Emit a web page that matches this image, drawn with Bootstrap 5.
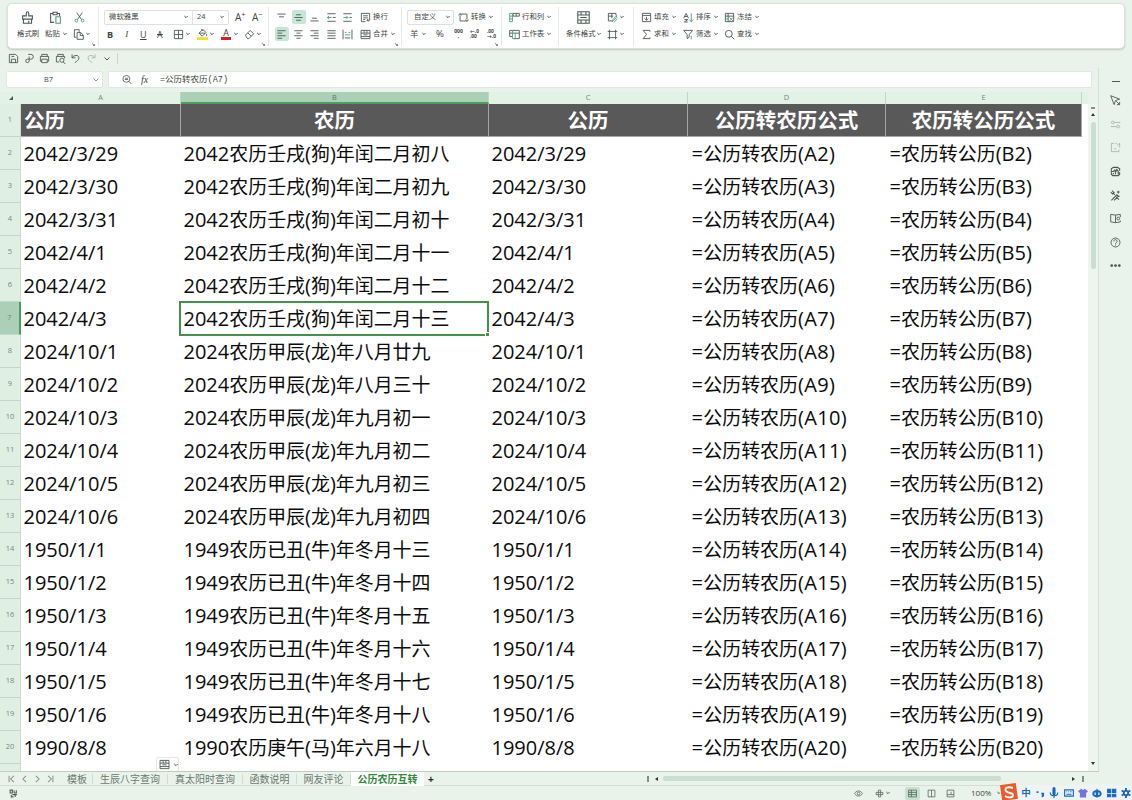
<!DOCTYPE html>
<html lang="zh-CN">
<head>
<meta charset="utf-8">
<meta name="viewport" content="width=device-width, initial-scale=1">
<title>公历农历互转</title>
<link href="https://cdn.jsdelivr.net/npm/bootstrap@5.3.0/dist/css/bootstrap.min.css" rel="stylesheet">
<style>
  body{height:800px;width:1132px;overflow:hidden;background:#eaf3eb;color:#3d4741;font-family:"Open Sans","Noto Sans CJK SC",sans-serif;font-size:7.4px;line-height:1}
  svg{display:block;flex:none;fill:none;stroke:#4b5952;stroke-width:1.3;overflow:visible}
  .ic{width:11px;height:11px}
  .big{width:13px;height:13px}
  .caret{width:4px;height:4px;stroke-width:1.5}
  .faded{opacity:.4}
  .ribbon{height:46px;margin:3px 7px 0;background:#fff;border:1px solid #d9e3da;border-radius:5px;box-shadow:0 1px 2px #b9c8bc}
  .sect{position:relative;height:39px;margin-top:3px;border-right:1px solid #e2e8e3;display:grid;grid-template-rows:20px 13px;align-content:start;white-space:nowrap}
  .sect:last-child{border:0}
  .line{display:grid;align-items:center;height:20px}
  .line + .line{height:14px}
  .cell{display:flex;align-items:center}
  .corner{position:absolute;right:3px;bottom:0;width:3px;height:3px;stroke-width:1.3}
  .clip{width:91px}.clip .line{grid-template-columns:28px 25px 1fr;padding-left:13px}
  .clip .line + .line{grid-template-columns:28px 28px 1fr;padding-left:9px}
  .face{width:170px}.face .l1{grid-template-columns:131px 17px 1fr;padding-left:5px}
  .face .l2{grid-template-columns:16px 17px 17px 16px 24px 24px 23px 1fr;padding-left:8px}
  .align{width:133px}.align .line{grid-template-columns:17px 16px 17px 16px 18px 1fr;padding-left:7px}
  .num{width:100px}.num .l1{grid-template-columns:51px 1fr;padding-left:5px}
  .num .l2{grid-template-columns:26px 17px 17px 17px 1fr;padding-left:8px}
  .rows{width:57px}.rows .line{padding-left:7px}
  .cond{width:75px}.cond .line{grid-template-columns:30px 1fr;padding-left:18px}
  .cond .line + .line{grid-template-columns:41px 1fr;padding-left:7px}
  .edit{width:140px}.edit .line{grid-template-columns:42px 41px 1fr;padding-left:7px}
  .cell .ic + span{margin-left:2px}
  .cell .caret{margin-left:3px}
  .cell .ic + .caret{margin-left:2px}
  .pick{height:15px;border:1px solid #dce2dd;border-radius:2px;align-items:center;display:flex}
  .on::before{content:"";position:absolute;inset:-1.5px;background:#c7e6d6;border-radius:2px;z-index:0}
  .on{position:relative;width:11px}.on svg{position:relative}
  .quick{height:19px;padding-left:8px;gap:4.6px}
  .quick .bar{width:1px;height:11px;background:#ccd6ce}
  .fbar{height:17px;margin-top:3px;padding-left:6px;gap:5px}
  .fbar>div{background:#fff;border:1px solid #dfe7e0;border-radius:2px;height:17px}
  .namebox{width:97px}.formula{width:984px;padding-left:13px}
  .heads{height:12px;margin-top:4px;background:#e2f2e5;color:#7b857e;width:1088px}
  .cols{display:grid;grid-template-columns:21px 160px 308px 199px 198px 196px 7px}
  .heads span{display:flex;align-items:center;justify-content:center;border-right:1px solid #c4d2c7}
  .heads .sel{background:#abd0b7;border-bottom:2px solid #4f9d5b;color:#527b5e;padding-top:2px}
  .sheet{height:667px;width:1089px;overflow:hidden;background:#fff;position:relative;color:#0b0b0b}
  .sheet .cols{height:33px}
  .sheet .cols>div{display:flex;align-items:center;font-size:18.95px;padding:0 0 0 2.5px;white-space:pre}
  .sheet .cols>div i{font-style:normal;font-size:20px}
  .sheet .cols>div:nth-child(5),.sheet .cols>div:nth-child(6){padding-left:3.5px}
  .sheet .cols>div:nth-child(5) i{letter-spacing:.35px}
  .sheet .cols>.rn{font-size:7.5px;color:#7b857e;background:#dff0e3;justify-content:center;padding:0;border-bottom:1px solid #c5d5c9;border-right:1px solid #cedbd1}
  .sheet .cols>.rn.sel{background:#abd0b7;border-right:2px solid #4f9d5b}
  .sheet .top>.hd{background:#595959;color:#fff;font-weight:700;font-size:20.5px;justify-content:center;border-right:1px solid #a6a6a6;border-bottom:1px solid #a6a6a6;padding:0!important}
  .sheet .top>.hd:nth-child(2){justify-content:start;padding-left:3px!important}
  .picked{position:absolute;left:179px;top:197px;width:310px;height:35px;border:2px solid #429248}
  .picked::after{content:"";position:absolute;right:-3px;bottom:-3px;width:5px;height:5px;background:#429248;border:1px solid #fff}
  .paste{position:absolute;left:156px;top:653px;width:23px;height:15px;background:#fff;border:1px solid #e5e9e6;border-radius:2px}
  .vbar{width:10px;height:667px;background:#eef5ef;padding-top:2px}
  .vbar .thumb{width:5px;height:147px;background:#cbded3;border-radius:2px;margin:5px auto 0}
  .side{width:33px;height:703px;padding-top:30px}
  .side svg{margin-bottom:12.65px}
  .main{width:1099px;border-right:1px solid #d5e0d7}
  .tabsrow{height:15px;border-top:1px solid #bfd0c2;border-bottom:1px solid #d4ded5;background:#e9f3ea;color:#6c7770;font-size:10px;width:1099px;white-space:nowrap}
  .tabsrow .tab{display:flex;align-items:center;justify-content:center;height:10px;border-right:1px solid #d0dbd2}
  .tabsrow .cur{height:14px;background:#fff;color:#2e8b3a;font-weight:700;border:0}
  .t1{width:31px}.t2{width:75px}.t3{width:75px}.t4{width:54px}.t5{width:54px}.t6{width:73px}
  .navs{width:62px;padding-left:7px;gap:4px}.navs svg{width:9px;height:8px;stroke:#88938b}
  .hthumb{width:338px;height:5px;background:#cbded3;border-radius:2px}
  .status{height:14px}
  .ime{position:absolute;left:1000px;top:785px;width:132px;height:15px;background:#eef4f3}
  .ime svg{stroke:#1967c5;width:10px;height:10px;stroke-width:1.8}
</style>
</head>
<body>
<svg width="0" height="0" class="position-absolute" aria-hidden="true">
  <symbol id="down" viewBox="0 0 6 6"><path d="M.5 1.500 3 4 5.500 1.500"/></symbol>
  <symbol id="launch" viewBox="0 0 6 6"><path d="M0 0v3M1 1l4 4M5 2v3H2"/></symbol>
  <symbol id="brush" viewBox="0 0 16 16"><path d="M6.500 6V2.500a1.500 1.500 0 0 1 3 0V6H14v4H2V6zM3 10v5h10v-5M9.500 12v3"/></symbol>
  <symbol id="clipb" viewBox="0 0 16 16"><path d="M6 14H2V3h3m5 0h3v3M5 1.500h5v3H5z"/><path d="M8.500 7H14v8H8.500z" stroke="#4b9b82"/></symbol>
  <symbol id="cut" viewBox="0 0 16 16"><path d="m4 1 7 10M12 1 5 11"/><g stroke="#4b9b82"><circle cx="3.500" cy="12.500" r="2"/><circle cx="12.500" cy="12.500" r="2"/></g></symbol>
  <symbol id="copy" viewBox="0 0 16 16"><path d="M5 12H2V1h7v3"/><path d="M6 5h5l4 4v6H6zM10.500 5v4.500H15"/></symbol>
  <symbol id="grid" viewBox="0 0 16 16"><path d="M2 2h12v12H2zM8 2v12M2 8h12"/></symbol>
  <symbol id="bucket" viewBox="0 0 16 16"><path d="M3 6 8.500 .5 13 5 7.500 10.500zM3 6h9M6 0l3 3M14 7v3"/><path d="M0 12h16v4H0z" fill="#ecdf24" stroke="none"/></symbol>
  <symbol id="erase" viewBox="0 0 16 16"><path d="m2 9 7-7 5 5-7 7H5zM5.500 5.500l5 5"/></symbol>
  <symbol id="atop" viewBox="0 0 16 16"><path d="M2 3h12M4.500 7h7"/></symbol>
  <symbol id="amid" viewBox="0 0 16 16"><path d="M4.500 4h7M2 8h12M4.500 12h7"/></symbol>
  <symbol id="abot" viewBox="0 0 16 16"><path d="M4.500 9h7M2 13h12"/></symbol>
  <symbol id="ind1" viewBox="0 0 16 16"><path d="M2 2.500h12M10 8h4M2 13.500h12"/><path d="M8 8H2m2.500-2.500L2 8l2.500 2.500" stroke="#4b9b82"/></symbol>
  <symbol id="ind2" viewBox="0 0 16 16"><path d="M2 2.500h12M11 8h3M2 13.500h12"/><path d="M2 8h6M6 5.500 8.500 8 6 10.500" stroke="#4b9b82"/></symbol>
  <symbol id="wrap" viewBox="0 0 16 16"><path d="M8 14H2V2h12v6M4.500 5.500h7M4.500 8.500h7M4.500 11h3M14 8v4h-4m2-2-2 2 2 2"/></symbol>
  <symbol id="al" viewBox="0 0 16 16"><path d="M2 2.500h12M2 6h7M2 9.800h12M2 13.500h7"/></symbol>
  <symbol id="ac" viewBox="0 0 16 16"><path d="M2 2.500h12M5 6h6M2 9.800h12M5 13.500h6"/></symbol>
  <symbol id="ar" viewBox="0 0 16 16"><path d="M2 2.500h12M7 6h7M2 9.800h12M7 13.500h7"/></symbol>
  <symbol id="aj" viewBox="0 0 16 16"><path d="M2 2.500h12M2 6h12M2 9.800h12M2 13.500h12"/></symbol>
  <symbol id="dist" viewBox="0 0 16 16"><path d="M1.500 1v14M14.500 1v14M4 13h8"/><path d="M4 5h2.500M9.500 5H12M4 8.500h8" stroke="#4b9b82"/></symbol>
  <symbol id="merge" viewBox="0 0 16 16"><path d="M1.500 2h13v12h-13zM1.500 6h13M6 2v4M10 2v4M1.500 11h13M5 8.500h6"/></symbol>
  <symbol id="conv" viewBox="0 0 16 16"><path d="M4 3h9v8M12 13H3V5M1 5l2-3 2 3M11 11l2 3 2-3"/></symbol>
  <symbol id="rc" viewBox="0 0 16 16"><path d="M6 2h9v4H6zM10.500 2v4"/><path d="M1 2h4v12H1zM1 6h4M1 10h4" stroke="#4b9b82"/></symbol>
  <symbol id="ws" viewBox="0 0 16 16"><path d="M1 2h14v12H7M1 2v9h4M1 6h14"/><path d="M5 2v12h4V6" stroke="#4b9b82"/></symbol>
  <symbol id="cf" viewBox="0 0 16 16"><path d="M1 1h14v14H1zM1 5h14M1 11h14M5 1v4M11 1v4M4 8h8M5 11v4M11 11v4"/></symbol>
  <symbol id="style" viewBox="0 0 16 16"><path d="M8 13H2V2h11v3M2 6h7M7 2v7"/><path d="m14 5-6 7v2l6-6zM10 15l5-5" stroke="#4b9b82"/></symbol>
  <symbol id="frame" viewBox="0 0 16 16"><path d="M3.500 1v14M12.500 1v14M1 3.500h14M1 12.500h14"/></symbol>
  <symbol id="fill" viewBox="0 0 16 16"><path d="M2 2h12v12H2zM2 5h12M8 7v5M5.500 9.500 8 12l2.500-2.500"/></symbol>
  <symbol id="sum" viewBox="0 0 16 16"><path d="M13 4V2H3l5 6-5 6h10v-2"/></symbol>
  <symbol id="sort" viewBox="0 0 16 16"><path d="m1 9 3.500-7L8 9M2.500 6.500h4M2 11h5l-5 3.500h5"/><path d="M12 2v12m-2.500-3 2.500 3 2.500-3" stroke="#4b9b82"/></symbol>
  <symbol id="funnel" viewBox="0 0 16 16"><path d="M1 2h13L9 8v4l-3 2V8z"/><path d="M12 10v5" stroke="#4b9b82"/></symbol>
  <symbol id="freeze" viewBox="0 0 16 16"><path d="M2 2h12v12H2zM6 2v12M2 6h12"/><path d="m8 8 5 5M13 8l-5 5M2 10h4" stroke="#4b9b82"/></symbol>
  <symbol id="find" viewBox="0 0 16 16"><circle cx="7" cy="7" r="5"/><path d="m10.500 10.500 4.500 4.500"/></symbol>
  <symbol id="save" viewBox="0 0 16 16"><path d="M2 2h9l3 3v9H2zM5 14V9h6v5M5 5h4"/></symbol>
  <symbol id="share" viewBox="0 0 16 16"><path d="M6 2h4a3.500 3.500 0 0 1 0 7H5a2.500 2.500 0 1 0 2.500 2.500V5"/></symbol>
  <symbol id="print" viewBox="0 0 16 16"><path d="M4 5V2h8v3M4 12H2V5h12v7h-2M4 9h8v5H4z"/></symbol>
  <symbol id="preview" viewBox="0 0 16 16"><path d="M4 5V2h8v3M6 13H2V5h12v3"/><circle cx="10" cy="10.500" r="3"/><path d="m12 13 3 3"/></symbol>
  <symbol id="undo" viewBox="0 0 16 16"><path d="M3 2v5h5M3 7c2-4 10-5 10 0 0 3-3 5-6 7"/></symbol>
  <symbol id="redo" viewBox="0 0 16 16"><path d="M13 2v5H8m5 0C11 3 3 2 3 7c0 3 3 5 6 7"/></symbol>
  <symbol id="zoomi" viewBox="0 0 16 16"><circle cx="7" cy="7" r="5.500"/><path d="M4.500 6h5M4.500 8h5m1.500 3 4 4"/></symbol>
  <symbol id="arrow" viewBox="0 0 16 16"><path d="m1 1 13 5-6 2-2 6zM9 9l5 5M14 10v4h-4"/></symbol>
  <symbol id="sliders" viewBox="0 0 16 16"><circle cx="4" cy="5" r="2"/><circle cx="12" cy="11" r="2"/><path d="M6 5h9M1 11h9"/></symbol>
  <symbol id="resize" viewBox="0 0 16 16"><path d="M6 2H2v12h11v-3M8 2h2M10 5l4-3v6M6 10h3"/></symbol>
  <symbol id="chart" viewBox="0 0 16 16"><path d="M2 7V4l3-2h6l3 2v3M2 9v3l2 2h8l2-2V9M1 8h4l2-2 1 3 2-4 2 3v4M5 10v2M8 10v2" stroke-width="1.700"/></symbol>
  <symbol id="tools" viewBox="0 0 16 16"><path d="m2 15 8-8 2 2-6 6M4 4l3 3M9 10l4 4M1 3l3 3 2-2-3-3M12 1v4M10 3h4M13 8v2" stroke-width="1.500"/></symbol>
  <symbol id="book" viewBox="0 0 16 16"><path d="M8 3 1 2v11l7 1 7-1v-2M8 3v11M8 3l7-1v4"/><circle cx="12" cy="8" r="2"/></symbol>
  <symbol id="help" viewBox="0 0 16 16"><circle cx="8" cy="8" r="6.500"/><path d="M5.500 6.500c0-4 5-3 5 0 0 1.500-2.500 1.500-2.500 3.500m0 1v1.500"/></symbol>
  <symbol id="dots" viewBox="0 0 16 16"><g fill="#4b5952" stroke="none"><circle cx="2.500" cy="8" r="2"/><circle cx="8" cy="8" r="2"/><circle cx="13.500" cy="8" r="2"/></g></symbol>
  <symbol id="eye" viewBox="0 0 16 16"><path d="M1 8c3-6 11-6 14 0-3 6-11 6-14 0z"/><circle cx="8" cy="8" r="2.500"/></symbol>
  <symbol id="cross" viewBox="0 0 16 16"><path d="M6 6V2h4v4h4v4h-4v4H6v-4H2V6zM6 6h4v4H6z"/></symbol>
  <symbol id="normal" viewBox="0 0 16 16"><path d="M1 2h14v12H1zM1 6h14M6 2v12M1 10h14"/></symbol>
  <symbol id="pages" viewBox="0 0 16 16"><path d="M2 2h12v12H2zM8 2v12"/></symbol>
  <symbol id="brk" viewBox="0 0 16 16"><path d="M2 2h12v12H2zM2 10h7V5M9 10h5"/></symbol>
</svg>

<header class="ribbon d-flex">
  <div class="sect clip">
    <div class="line"><svg class="big"><use href="#brush"/></svg><svg class="big"><use href="#clipb"/></svg><svg class="ic"><use href="#cut"/></svg></div>
    <div class="line"><span>格式刷</span><div class="cell"><span>粘贴</span><svg class="caret"><use href="#down"/></svg></div><div class="cell"><svg class="ic"><use href="#copy"/></svg><svg class="caret"><use href="#down"/></svg></div></div>
    <svg class="corner"><use href="#launch"/></svg>
  </div>
  <div class="sect face">
    <div class="line l1"><div class="pick" style="width:125px"><span class="ps-1" style="width:79px">微软雅黑</span><svg class="caret"><use href="#down"/></svg><span class="border-start h-100 d-flex align-items-center ms-1 ps-1" style="width:28px">24</span><svg class="caret"><use href="#down"/></svg></div>
      <span style="font-size:10px">A<sup>+</sup></span><span style="font-size:10px">A<sup>−</sup></span></div>
    <div class="line l2" style="font-size:9px"><b>B</b><i style="font-family:'Liberation Serif'">&nbsp;I</i><u>U</u><s>A</s>
      <div class="cell"><svg class="ic"><use href="#grid"/></svg><svg class="caret"><use href="#down"/></svg></div>
      <div class="cell"><svg class="ic"><use href="#bucket"/></svg><svg class="caret"><use href="#down"/></svg></div>
      <div class="cell"><span style="width:10px;text-align:center;border-bottom:3px solid #d91e28;line-height:8px">A</span><svg class="caret"><use href="#down"/></svg></div>
      <div class="cell"><svg class="ic"><use href="#erase"/></svg><svg class="caret"><use href="#down"/></svg></div></div>
    <svg class="corner"><use href="#launch"/></svg>
  </div>
  <div class="sect align">
    <div class="line"><svg class="ic"><use href="#atop"/></svg><div class="on"><svg class="ic"><use href="#amid"/></svg></div><svg class="ic"><use href="#abot"/></svg><svg class="ic"><use href="#ind1"/></svg><svg class="ic"><use href="#ind2"/></svg><div class="cell"><svg class="ic"><use href="#wrap"/></svg><span>换行</span></div></div>
    <div class="line"><div class="on"><svg class="ic"><use href="#al"/></svg></div><svg class="ic"><use href="#ac"/></svg><svg class="ic"><use href="#ar"/></svg><svg class="ic"><use href="#aj"/></svg><svg class="ic"><use href="#dist"/></svg><div class="cell"><svg class="ic"><use href="#merge"/></svg><span>合并</span><svg class="caret"><use href="#down"/></svg></div></div>
    <svg class="corner"><use href="#launch"/></svg>
  </div>
  <div class="sect num">
    <div class="line l1"><div class="pick" style="width:47px"><span style="width:37px;padding-left:6px">自定义</span><svg class="caret" style="margin-left:1px"><use href="#down"/></svg></div><div class="cell"><svg class="ic"><use href="#conv"/></svg><span>转换</span><svg class="caret"><use href="#down"/></svg></div></div>
    <div class="line l2"><div class="cell" style="font-size:8.5px">羊<svg class="caret"><use href="#down"/></svg></div><span style="font-size:9.5px">%</span>
      <b style="font-size:5px;line-height:5px;text-align:center;width:11px">000<br>,</b><b style="font-size:4.8px;line-height:5px;width:11px">←.0<br>.00</b><b style="font-size:4.8px;line-height:5px;width:11px">.00<br>→.0</b></div>
    <svg class="corner"><use href="#launch"/></svg>
  </div>
  <div class="sect rows">
    <div class="line"><div class="cell"><svg class="ic"><use href="#rc"/></svg><span>行和列</span><svg class="caret"><use href="#down"/></svg></div></div>
    <div class="line"><div class="cell"><svg class="ic"><use href="#ws"/></svg><span>工作表</span><svg class="caret"><use href="#down"/></svg></div></div>
  </div>
  <div class="sect cond">
    <div class="line"><svg class="big"><use href="#cf"/></svg><div class="cell"><svg class="ic"><use href="#style"/></svg><svg class="caret"><use href="#down"/></svg></div></div>
    <div class="line"><div class="cell"><span>条件格式</span><svg class="caret" style="margin-left:1px"><use href="#down"/></svg></div><div class="cell"><svg class="ic"><use href="#frame"/></svg><svg class="caret"><use href="#down"/></svg></div></div>
  </div>
  <div class="sect edit">
    <div class="line"><div class="cell"><svg class="ic"><use href="#fill"/></svg><span>填充</span><svg class="caret"><use href="#down"/></svg></div><div class="cell"><svg class="ic"><use href="#sort"/></svg><span>排序</span><svg class="caret"><use href="#down"/></svg></div><div class="cell"><svg class="ic"><use href="#freeze"/></svg><span>冻结</span><svg class="caret"><use href="#down"/></svg></div></div>
    <div class="line"><div class="cell"><svg class="ic"><use href="#sum"/></svg><span>求和</span><svg class="caret"><use href="#down"/></svg></div><div class="cell"><svg class="ic"><use href="#funnel"/></svg><span>筛选</span><svg class="caret"><use href="#down"/></svg></div><div class="cell"><svg class="ic"><use href="#find"/></svg><span>查找</span><svg class="caret"><use href="#down"/></svg></div></div>
  </div>
</header>

<div class="quick d-flex align-items-center">
  <svg class="ic"><use href="#save"/></svg><svg class="ic"><use href="#share"/></svg><svg class="ic"><use href="#print"/></svg><svg class="ic"><use href="#preview"/></svg><svg class="ic"><use href="#undo"/></svg><svg class="ic faded"><use href="#redo"/></svg><svg style="width:6px;height:6px;margin:0 3px 0 2px;stroke-width:1"><use href="#down"/></svg><div class="bar"></div>
</div>

<div class="d-flex">
  <main class="main">
    <div class="fbar d-flex">
      <div class="namebox d-flex align-items-center"><span class="text-center" style="width:83px">B7</span><svg style="width:6px;height:6px;stroke:#8b958e;margin-left:3px;stroke-width:1"><use href="#down"/></svg></div>
      <div class="formula d-flex align-items-center"><svg class="ic" style="width:10px"><use href="#zoomi"/></svg><i style="font:italic 10px 'Liberation Serif';margin-left:9px;width:19px">fx</i><span style="font-size:8.5px;padding-top:1px;font-family:'Liberation Mono','Noto Sans CJK SC',monospace">=公历转农历(A7)</span></div>
    </div>
    <div class="heads cols"><span class="border-0"><svg width="4" height="4"><path d="M4 0v4H0z" fill="#4b5952" stroke="none"/></svg></span><span>A</span><span class="sel">B</span><span>C</span><span>D</span><span>E</span></div>
    <div class="d-flex">
      <div class="sheet" id="sheet"><div class="picked"></div><div class="paste d-flex align-items-center"><svg class="ic" style="margin-left:2px"><use href="#merge"/></svg><svg class="caret ms-1"><use href="#down"/></svg></div></div>
      <div class="vbar"><svg class="mx-auto" width="6" height="11"><path d="M1 2h4"/><path d="m1 10 2-3 2 3z" fill="#333" stroke="none"/></svg><div class="thumb"></div><svg class="mx-auto" width="4" height="3" style="margin-top:493px"><path d="M0 0h4L2 3z" fill="#333" stroke="none"/></svg></div>
    </div>
  </main>
  <aside class="side d-flex flex-column align-items-center">
    <svg style="width:10px;height:2px;margin:-18px 0 13px;stroke-width:1"><path d="M1 1.500h8"/></svg>
    <svg class="ic"><use href="#arrow"/></svg><svg class="ic faded"><use href="#sliders"/></svg><svg class="ic faded"><use href="#resize"/></svg><svg class="ic"><use href="#chart"/></svg><svg class="ic"><use href="#tools"/></svg><svg class="ic"><use href="#book"/></svg><svg class="ic"><use href="#help"/></svg><svg class="ic"><use href="#dots"/></svg>
  </aside>
</div>

<nav class="tabsrow d-flex align-items-center">
  <div class="navs d-flex"><svg viewBox="0 0 10 10"><path d="M2 1v8M8 1 4 5l4 4"/></svg><svg viewBox="0 0 10 10"><path d="M7 1 3 5l4 4"/></svg><svg viewBox="0 0 10 10"><path d="m3 1 4 4-4 4"/></svg><svg viewBox="0 0 10 10"><path d="M8 1v8M2 1l4 4-4 4"/></svg></div>
  <div class="tab t1">模板</div><div class="tab t2">生辰八字查询</div><div class="tab t3">真太阳时查询</div><div class="tab t4">函数说明</div><div class="tab t5">网友评论</div><div class="tab t6 cur">公历农历互转</div>
  <b class="text-dark ms-1" style="width:219px">+</b>
  <svg width="16" height="6"><path d="M1 0v6"/><path d="M8 3l3-2v4z" fill="#333" stroke="none"/></svg><div class="hthumb"></div>
  <svg width="20" height="6" style="margin-left:67px"><path d="M4 1l3 2-3 2z" fill="#333" stroke="none"/><path d="M15 0v6"/></svg>
</nav>
<footer class="status d-flex align-items-center">
  <svg class="ic" style="margin-left:9px;width:9px;height:9px" viewBox="0 0 16 16"><path d="M2 2h4v5H2zM9 2v5M13 2v5M9 7h5M4 10v4h4M11 10v4M6 10h8" stroke-width="1.800"/></svg>
  <svg class="ic" style="margin-left:836px;width:9px;height:9px"><use href="#eye"/></svg><svg class="ic" style="margin-left:12px;width:9px;height:9px"><use href="#cross"/></svg><svg class="caret" style="margin-left:2px"><use href="#down"/></svg>
  <div style="background:#c5e2d0;padding:2px 3px;margin-left:15px;border-radius:2px"><svg style="width:9px;height:9px"><use href="#normal"/></svg></div><svg style="width:9px;height:9px;margin-left:7px"><use href="#pages"/></svg><svg style="width:9px;height:9px;margin-left:10px"><use href="#brk"/></svg><span style="margin-left:16px;font-size:8px">100%</span><svg class="caret" style="margin-left:6px"><use href="#down"/></svg>
</footer>

<div class="ime d-flex align-items-center" style="gap:4.3px">
  <svg viewBox="0 0 18 18" style="width:18px;height:18px;margin-top:-2px"><path d="m1 3 14-2 2 14-14 2z" fill="#ee5a28" stroke="#ee5a28"/><path d="M13 5C8 3 4 5 6 8s7 1 7 4-5 3-8 1" stroke="#fff" stroke-width="2"/></svg>
  <b style="font-size:9.5px;color:#1967c5;margin-left:-1px">中</b>
  <svg viewBox="0 0 16 16"><path d="M4 5v3M10 9h3v3l-2 2" stroke-width="3"/></svg>
  <svg viewBox="0 0 16 16"><path d="M8 1v8" stroke-width="5" stroke-linecap="round"/><path d="M2 7c0 7 12 7 12 0M8 12v4"/></svg>
  <svg viewBox="0 0 16 16"><path d="M1 3h14v10H1zM4 6h1m2 0h1m2 0h2M4 10h8"/></svg>
  <svg viewBox="0 0 16 16"><path d="m5 1 3 2 3-2 5 4-3 3v7H3V8L0 5z" fill="#7770df" stroke="none"/></svg>
  <svg viewBox="0 0 16 16"><path d="M8 1v3" /><ellipse cx="8" cy="9" rx="7.500" ry="6" fill="#1967c5" stroke="none"/><path d="M5 7v4M11 7v4" stroke="#fff"/></svg>
  <svg viewBox="0 0 16 16"><path d="M1 2h5v5H1zM9 2h5v5H9zM1 10h5v4H1zM9 10h5v4H9z" fill="#1967c5"/></svg>
  <svg viewBox="0 0 16 16"><path d="M8 0v16M1 4l14 8M15 4 1 12" stroke-width="3"/><circle cx="8" cy="8" r="5" fill="#1967c5" stroke="none"/><circle cx="8" cy="8" r="2" fill="#fff" stroke="none"/></svg>
</div>

<script>
  const header = ["公历", "农历", "公历", "公历转农历公式", "农历转公历公式"];
  const data = [
    ["2042/3/29", "2042农历壬戌(狗)年闰二月初八"], ["2042/3/30", "2042农历壬戌(狗)年闰二月初九"],
    ["2042/3/31", "2042农历壬戌(狗)年闰二月初十"], ["2042/4/1", "2042农历壬戌(狗)年闰二月十一"],
    ["2042/4/2", "2042农历壬戌(狗)年闰二月十二"], ["2042/4/3", "2042农历壬戌(狗)年闰二月十三"],
    ["2024/10/1", "2024农历甲辰(龙)年八月廿九"], ["2024/10/2", "2024农历甲辰(龙)年八月三十"],
    ["2024/10/3", "2024农历甲辰(龙)年九月初一"], ["2024/10/4", "2024农历甲辰(龙)年九月初二"],
    ["2024/10/5", "2024农历甲辰(龙)年九月初三"], ["2024/10/6", "2024农历甲辰(龙)年九月初四"],
    ["1950/1/1", "1949农历已丑(牛)年冬月十三"], ["1950/1/2", "1949农历已丑(牛)年冬月十四"],
    ["1950/1/3", "1949农历已丑(牛)年冬月十五"], ["1950/1/4", "1949农历已丑(牛)年冬月十六"],
    ["1950/1/5", "1949农历已丑(牛)年冬月十七"], ["1950/1/6", "1949农历已丑(牛)年冬月十八"],
    ["1990/8/8", "1990农历庚午(马)年六月十八"]
  ];
  // Latin runs are set slightly larger than the Chinese ones
  const latin = t => t.replace(/[\x20-\x7e]+/g, "<i>$&</i>");
  const row = (n, cells, rowCls, cls) =>
    `<div class="cols ${rowCls}"><div class="rn${n === 7 ? " sel" : ""}">${n}</div>` +
    cells.map(c => `<div class="${cls}"><span>${latin(c)}</span></div>`).join("") + "</div>";
  let html = row(1, header, "top", "hd");
  data.forEach(([a, b], i) => {
    const n = i + 2;
    html += row(n, [a, b, a, `=公历转农历(A${n})`, `=农历转公历(B${n})`], "", "val");
  });
  html += row("", [], "", "");
  document.getElementById("sheet").insertAdjacentHTML("afterbegin", html);
</script>
<script src="https://cdn.jsdelivr.net/npm/bootstrap@5.3.0/dist/js/bootstrap.bundle.min.js"></script>
</body>
</html>
